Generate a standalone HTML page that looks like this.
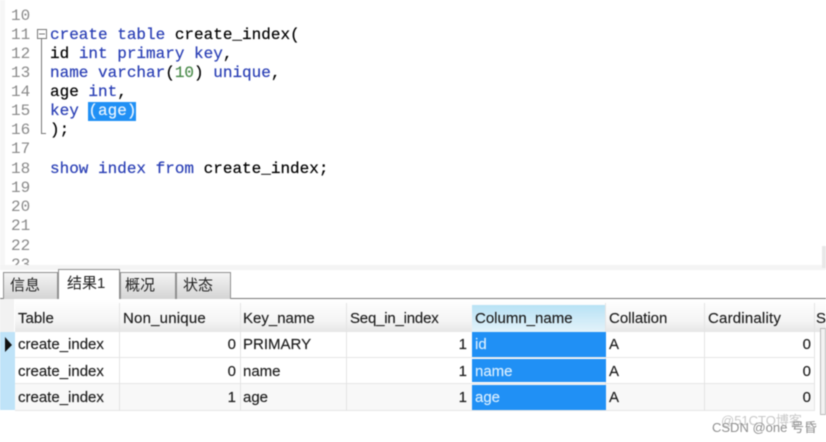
<!DOCTYPE html>
<html><head><meta charset="utf-8">
<style>
html,body{margin:0;padding:0;background:#fff}
#p{position:relative;width:826px;height:442px;overflow:hidden;background:#fff}
#b{position:absolute;left:0;top:0;width:826px;height:442px;filter:blur(.5px)}
.a{position:absolute;white-space:pre}
.c{font:16px/19px "Liberation Mono",monospace;color:#000;left:50px;margin-top:1px;-webkit-text-stroke:.2px currentColor}
.n{font:16px/19px "Liberation Mono",monospace;color:#8a8a8a;left:11px;margin-top:1px}
.k{color:#2a3fb5}.g{color:#4a8a4a}
.t{font:15px/20px "Liberation Sans","Noto Sans CJK SC",sans-serif;color:#1c1c1c;margin-top:1px;-webkit-text-stroke:.15px currentColor}
.r{text-align:right}
.tab{position:absolute;box-sizing:border-box;top:272px;height:27px;background:linear-gradient(#f4f4f4,#d4d4d4);border:1px solid #8f8f8f;border-bottom:none;font:15px/25px "Liberation Sans","Noto Sans CJK SC",sans-serif;color:#222;text-align:left;padding-left:6px}
.h{position:absolute;top:299px;height:33px;background:linear-gradient(#fff,#f5f5f5 65%,#e6e6e6)}
.v{position:absolute;width:1px;background:#e4e4e4}
.l{position:absolute;height:1px;background:#e6e6e6}
</style></head><body><div id="p"><div id="b">
<div class="a" style="left:0;top:0;width:5px;height:265px;background:#f6f6f6"></div>
<div class="a n" style="top:6px">10</div>
<div class="a n" style="top:25px">11</div>
<div class="a n" style="top:44px">12</div>
<div class="a n" style="top:63px">13</div>
<div class="a n" style="top:82px">14</div>
<div class="a n" style="top:101px">15</div>
<div class="a n" style="top:120px">16</div>
<div class="a n" style="top:139px">17</div>
<div class="a n" style="top:159px">18</div>
<div class="a n" style="top:178px">19</div>
<div class="a n" style="top:197px">20</div>
<div class="a n" style="top:216px">21</div>
<div class="a n" style="top:236px">22</div>
<div class="a n" style="top:255px">23</div>

<svg class="a" style="left:35px;top:28px" width="16" height="112" viewBox="0 0 16 112">
<rect x="2.500" y="1.500" width="9" height="9" fill="#fff" stroke="#777"/>
<path d="M4 6h6M6.500 11V105.500H11" fill="none" stroke="#777"/>
</svg>
<div class="a" style="left:88px;top:102px;width:48px;height:19px;background:#2090f5"></div>

<div class="a c" style="top:25px"><span class="k">create table</span> create_index(</div>
<div class="a c" style="top:44px">id <span class="k">int primary key</span>,</div>
<div class="a c" style="top:63px"><span class="k">name varchar</span>(<span class="g">10</span>) <span class="k">unique</span>,</div>
<div class="a c" style="top:82px">age <span class="k">int</span>,</div>
<div class="a c" style="top:101px"><span class="k">key</span> <span style="color:#e8f4ff">(age)</span></div>
<div class="a c" style="top:120px">);</div>
<div class="a c" style="top:159px"><span class="k">show index from</span> create_index;</div>

<div class="a" style="left:0;top:265px;width:826px;height:5px;background:#f4f4f4"></div>
<div class="a" style="left:822px;top:246px;width:4px;height:22px;background:#e8e8e8"></div>

<div class="a" style="left:0;top:298px;width:826px;height:1px;background:#777"></div>
<div class="tab" style="left:3px;width:55px">信息</div>
<div class="tab" style="left:120px;width:56px;padding-left:4px">概况</div>
<div class="tab" style="left:176px;width:55px">状态</div>
<div class="tab" style="left:58px;top:269px;width:62px;height:31px;background:#fff;line-height:27px;padding-left:8px">结果1</div>

<div class="h" style="left:0;width:14px;background:#f2f2f2"></div>
<div class="h" style="left:15px;width:811px"></div>
<div class="h" style="left:472px;width:134px;top:305px;height:27px;background:linear-gradient(#b8e2f5,#e4f3fa)"></div>

<div class="a" style="left:0;top:332px;width:15px;height:78px;background:#bfe3f8"></div>
<svg class="a" style="left:4px;top:337px" width="9" height="16"><path d="M1 0L8 8L1 15Z" fill="#111"/></svg>

<div class="l" style="left:15px;top:357px;width:800px"></div>
<div class="l" style="left:15px;top:383px;width:800px"></div>
<div class="l" style="left:15px;top:410px;width:800px"></div>
<div class="a" style="left:15px;top:384px;width:800px;height:26px;background:#f8f8f8"></div>

<div class="v" style="left:119px;top:303px;height:107px"></div>
<div class="v" style="left:240px;top:303px;height:107px"></div>
<div class="v" style="left:346px;top:303px;height:107px"></div>
<div class="v" style="left:605px;top:303px;height:107px"></div>
<div class="v" style="left:704px;top:303px;height:107px"></div>
<div class="v" style="left:814px;top:303px;height:107px"></div>

<div class="a" style="left:472px;top:332px;width:134px;height:25px;background:#2090f5"></div>
<div class="a" style="left:472px;top:359px;width:134px;height:23px;background:#2090f5"></div>
<div class="a" style="left:472px;top:385px;width:134px;height:25px;background:#2090f5"></div>

<div class="a t" style="left:18px;top:308px">Table</div>
<div class="a t" style="left:123px;top:308px;letter-spacing:.2px">Non_unique</div>
<div class="a t" style="left:243px;top:308px">Key_name</div>
<div class="a t" style="left:350px;top:308px;letter-spacing:-.2px">Seq_in_index</div>
<div class="a t" style="left:475px;top:308px">Column_name</div>
<div class="a t" style="left:609px;top:308px">Collation</div>
<div class="a t" style="left:708px;top:308px;letter-spacing:.2px">Cardinality</div>
<div class="a t" style="left:816px;top:308px">S</div>

<div class="a t" style="left:18px;top:334px">create_index</div>
<div class="a t r" style="left:199px;top:334px;width:37px">0</div>
<div class="a t" style="left:243px;top:334px">PRIMARY</div>
<div class="a t r" style="left:430px;top:334px;width:37px">1</div>
<div class="a t" style="left:475px;top:334px;color:#d8eeff">id</div>
<div class="a t" style="left:609px;top:334px">A</div>
<div class="a t r" style="left:774px;top:334px;width:37px">0</div>

<div class="a t" style="left:18px;top:361px">create_index</div>
<div class="a t r" style="left:199px;top:361px;width:37px">0</div>
<div class="a t" style="left:243px;top:361px">name</div>
<div class="a t r" style="left:430px;top:361px;width:37px">1</div>
<div class="a t" style="left:475px;top:361px;color:#d8eeff">name</div>
<div class="a t" style="left:609px;top:361px">A</div>
<div class="a t r" style="left:774px;top:361px;width:37px">0</div>

<div class="a t" style="left:18px;top:387px">create_index</div>
<div class="a t r" style="left:199px;top:387px;width:37px">1</div>
<div class="a t" style="left:243px;top:387px">age</div>
<div class="a t r" style="left:430px;top:387px;width:37px">1</div>
<div class="a t" style="left:475px;top:387px;color:#d8eeff">age</div>
<div class="a t" style="left:609px;top:387px">A</div>
<div class="a t r" style="left:774px;top:387px;width:37px">0</div>

<div class="a" style="left:820px;top:328px;width:6px;height:87px;box-sizing:border-box;border:1px solid #bbb;background:#f2f2f2"></div>

<div class="a" style="left:721px;top:412px;font:13px/18px 'Liberation Sans','Noto Sans CJK SC',sans-serif;color:#c8c8c8">@51CTO博客</div>
<div class="a" style="left:712px;top:419px;font:13px/18px 'Liberation Sans','Noto Sans CJK SC',sans-serif;color:#8f8f8f">CSDN @one 号昏</div>
</div></div></body></html>
